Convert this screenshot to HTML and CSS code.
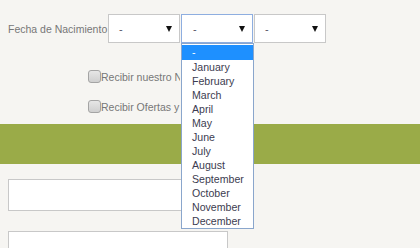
FILE: index.html
```html
<!DOCTYPE html>
<html>
<head>
<meta charset="UTF-8">
<title>Registro</title>
<link rel="stylesheet" href="styles.css">
</head>
<body>
  <form class="signup">
    <div class="birth">
      <span class="birth-label">Fecha de Nacimiento</span>
      <div class="select"><span>-</span><i class="arrow"></i></div>
      <div class="select open">
        <span>-</span><i class="arrow"></i>
        <ul class="options">
          <li class="selected">-</li>
          <li>January</li>
          <li>February</li>
          <li>March</li>
          <li>April</li>
          <li>May</li>
          <li>June</li>
          <li>July</li>
          <li>August</li>
          <li>September</li>
          <li>October</li>
          <li>November</li>
          <li>December</li>
        </ul>
      </div>
      <div class="select"><span>-</span><i class="arrow"></i></div>
    </div>
    <label class="check"><span class="box"></span><span class="check-text">Recibir nuestro Newsletter</span></label>
    <label class="check"><span class="box"></span><span class="check-text">Recibir Ofertas y Promociones</span></label>
  </form>
  <div class="band"></div>
  <div class="fields">
    <div class="field"></div>
    <div class="field"></div>
  </div>
</body>
</html>
```

FILE: styles.css
```css
/* Page */
html, body {
  margin: 0;
  padding: 0;
  overflow: hidden;
}
body {
  background: #f6f5f2;
  font-family: "Liberation Sans", Arial, sans-serif;
  color: #777;
}
.signup {
  margin: 0;
  padding: 14px 0 0 8px;
}
/* Birth date row */
.birth {
  display: flex;
  align-items: center;
}
.birth-label {
  font-size: 10.5px;
  width: 100px;
  white-space: nowrap;
}
.select {
  position: relative;
  box-sizing: border-box;
  width: 72px;
  height: 29px;
  margin-right: 1px;
  background: white;
  border: 1px solid #c8c8c8;
  display: flex;
  align-items: center;
  justify-content: space-between;
  padding: 0 7px 0 10px;
  font-size: 11px;
  color: #556;
}
.select.open {
  border-color: #8eaee0;
  padding-left: 11px;
}
.arrow {
  width: 0;
  height: 0;
  border-left: 3.5px solid transparent;
  border-right: 3.5px solid transparent;
  border-top: 6px solid #111;
}
/* Open list */
.options {
  position: absolute;
  top: 28px;
  left: -1px;
  width: 73px;
  box-sizing: border-box;
  margin: 0;
  padding: 1px 0 0 0;
  list-style: none;
  background: white;
  border: 1px solid #8aa6cc;
  z-index: 2;
}
.options li {
  height: 14px;
  line-height: 14px;
  padding-left: 10px;
  font-size: 10.6px;
  color: #3c3c50;
  white-space: nowrap;
}
.options li.selected {
  background: #1e90ff;
  color: white;
  height: 15px;
  line-height: 15px;
}
/* Checkboxes */
.check {
  display: flex;
  align-items: center;
  padding-left: 80px;
  font-size: 10.5px;
  color: #777;
  height: 13px;
}
.check-text {
  width: 79px;
  overflow: hidden;
  white-space: nowrap;
}
.check:first-of-type {
  margin-top: 27px;
}
.check + .check {
  margin-top: 17px;
}
.box {
  box-sizing: border-box;
  width: 13px;
  height: 13px;
  border: 1px solid #a4a4a4;
  border-radius: 3px;
  background: linear-gradient(#e6e6e6, #cfcfcf);
}
/* Green band */
.band {
  margin-top: 11px;
  height: 40px;
  background: #9aab48;
}
/* Text fields */
.fields {
  padding: 15px 0 0 8px;
  display: flex;
  flex-direction: column;
  gap: 20px;
}
.field {
  box-sizing: border-box;
  width: 220px;
  height: 32px;
  background: white;
  border: 1px solid #c8c8c8;
}
```
